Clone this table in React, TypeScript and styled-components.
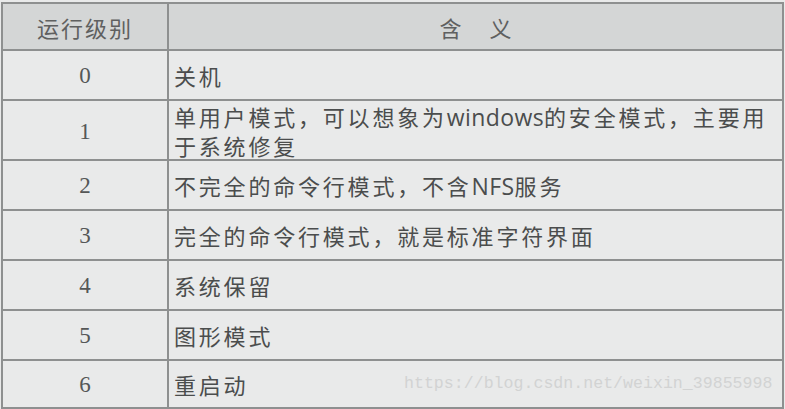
import React from 'react';
import styled, {createGlobalStyle} from 'styled-components';

const GlobalStyle = createGlobalStyle`
  html, body {
    margin: 0;
    padding: 0;
    background: #e9eaea;
  }
  body {
    font-family: "Noto Sans CJK SC", "Noto Sans", sans-serif;
  }
`;

const Page = styled.div`
  position: relative;
  width: 785px;
  height: 409px;
  overflow: hidden;
  padding: 2px 0 0 1px;
  box-sizing: border-box;
`;

const Table = styled.div`
  width: 783px;
  box-sizing: border-box;
  border: 2px solid #8e9090;
  border-bottom: none;
  background: #e9eaea;
`;

const Row = styled.div<{h: number; head?: boolean}>`
  display: grid;
  grid-template-columns: 164px 1fr;
  height: ${({h}) => h}px;
  box-sizing: border-box;
  border-bottom: 2px solid #8e9090;
  background: ${({head}) => (head ? '#d4d6d6' : '#e9eaea')};
`;

const HeadCell = styled.div<{spaced?: boolean}>`
  display: flex;
  align-items: center;
  justify-content: center;
  color: #5f6060;
  font-size: 22px;
  line-height: 28px;
  letter-spacing: ${({spaced}) => (spaced ? '28px' : '2px')};
  text-indent: ${({spaced}) => (spaced ? '28px' : '0')};
  & + & {
    border-left: 2px solid #8e9090;
  }
`;

const LevelCell = styled.div`
  display: flex;
  align-items: center;
  justify-content: center;
  padding-top: 2px;
  font-family: "Liberation Serif", "DejaVu Serif", serif;
  font-size: 23px;
  color: #555757;
`;

const MeaningCell = styled.div`
  display: flex;
  align-items: center;
  padding: 1px 2px 0 5px;
  border-left: 2px solid #8e9090;
  font-size: 22px;
  line-height: 29px;
  letter-spacing: 2.8px;
  color: #4b4d4d;
`;

const Latin = styled.span`
  font-family: "Open Sans", "Noto Sans", sans-serif;
  font-size: 23px;
  line-height: 20px;
  vertical-align: baseline;
  letter-spacing: 0.4px;
`;

const Watermark = styled.div`
  position: absolute;
  left: 404px;
  top: 374px;
  font-family: "Liberation Mono", "DejaVu Sans Mono", monospace;
  font-size: 16.6px;
  color: #d2d3d3;
  white-space: nowrap;
`;

const levels: {level: string; text: React.ReactNode; h: number}[] = [
  {level: '0', text: '关机', h: 50},
  {
    level: '1',
    text: (
      <span>
        单用户模式，可以想象为<Latin>windows</Latin>的安全模式，主要用于系统修复
      </span>
    ),
    h: 60,
  },
  {
    level: '2',
    text: (
      <span>
        不完全的命令行模式，不含<Latin>NFS</Latin>服务
      </span>
    ),
    h: 50,
  },
  {level: '3', text: '完全的命令行模式，就是标准字符界面', h: 50},
  {level: '4', text: '系统保留', h: 50},
  {level: '5', text: '图形模式', h: 50},
  {level: '6', text: '重启动', h: 48},
];

const App: React.FC = () => (
  <>
    <GlobalStyle />
    <Page>
      <Table>
        <Row h={47} head>
          <HeadCell>运行级别</HeadCell>
          <HeadCell spaced>含义</HeadCell>
        </Row>
        {levels.map(({level, text, h}) => (
          <Row key={level} h={h}>
            <LevelCell>{level}</LevelCell>
            <MeaningCell>{text}</MeaningCell>
          </Row>
        ))}
      </Table>
      <Watermark>https://blog.csdn.net/weixin_39855998</Watermark>
    </Page>
  </>
);

export default App;
